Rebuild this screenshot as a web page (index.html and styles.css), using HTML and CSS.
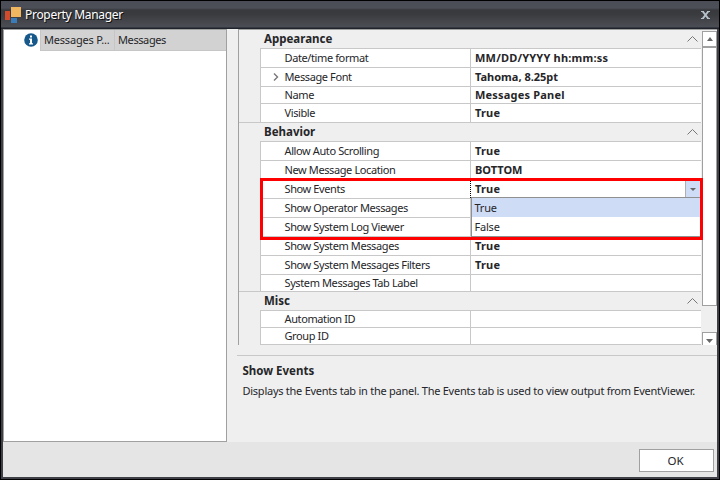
FILE: index.html
```html
<!DOCTYPE html>
<html lang="en">
<head>
<meta charset="utf-8">
<title>Property Manager</title>
<link rel="stylesheet" href="styles.css">
</head>
<body>
<div class="window">
  <header class="titlebar">
    <svg class="app-icon" width="17" height="17" viewBox="0 0 17 17" shape-rendering="crispEdges"><path fill="#d24b2c" d="M0 4h5v9H0z"/><path fill="#f0b660" d="M6 0h10v10H6z"/><path fill="#3b7cb8" d="M6 11h6v5H6z"/></svg>
    <h1>Property Manager</h1>
    <svg class="close" width="9" height="8" viewBox="0 0 9 8"><path d="M0 .5h3M6 .5h3M0 7.5h3M6 7.5h3" stroke="#b4c0ca"/><path d="M1.8.5l5.4 7M7.2.5l-5.4 7" stroke="#b4c0ca" stroke-width="1.9"/></svg>
  </header>
  <main class="content">
    <section class="list">
      <div class="list-row">
        <div class="info"><svg width="14" height="14" viewBox="0 0 14 14"><circle cx="7" cy="7" r="6.8" fill="#17598a"/><path d="M6 2.5h2v2H6zM5 5.5h3v4.7h1v1.2H5v-1.2h1V6.7H5z" fill="#fff"/></svg></div>
        <div class="cell type">Messages P...</div>
        <div class="cell name">Messages</div>
      </div>
    </section>
    <section class="side">
      <div class="grid-area">
        <div class="grid">
          <div class="category"><span>Appearance</span><svg class="chev" width="11" height="6" viewBox="0 0 11 6"><path d="M.5 5.5l5-5 5 5"/></svg></div>
          <div class="row"><div class="key">Date/time format</div><div class="value">MM/DD/YYYY hh:mm:ss</div></div>
          <div class="row"><div class="key"><svg class="expand" width="6" height="8" viewBox="0 0 6 8"><path d="M1 .5l3.5 3.5L1 7.5"/></svg>Message Font</div><div class="value tight">Tahoma, 8.25pt</div></div>
          <div class="row short"><div class="key">Name</div><div class="value">Messages Panel</div></div>
          <div class="row last"><div class="key">Visible</div><div class="value">True</div></div>
          <div class="category"><span>Behavior</span><svg class="chev" width="11" height="6" viewBox="0 0 11 6"><path d="M.5 5.5l5-5 5 5"/></svg></div>
          <div class="row"><div class="key">Allow Auto Scrolling</div><div class="value">True</div></div>
          <div class="row"><div class="key">New Message Location</div><div class="value tight">BOTTOM</div></div>
          <div class="row"><div class="key">Show Events</div><div class="value editing">True<span class="drop"><svg width="6" height="3" viewBox="0 0 6 3"><path d="M0 0h6L3 3z" fill="#666"/></svg></span></div></div>
          <div class="row"><div class="key">Show Operator Messages</div><div class="value"></div></div>
          <div class="row"><div class="key">Show System Log Viewer</div><div class="value"></div></div>
          <div class="row"><div class="key">Show System Messages</div><div class="value">True</div></div>
          <div class="row"><div class="key">Show System Messages Filters</div><div class="value">True</div></div>
          <div class="row short last"><div class="key">System Messages Tab Label</div><div class="value"></div></div>
          <div class="category"><span>Misc</span><svg class="chev" width="11" height="6" viewBox="0 0 11 6"><path d="M.5 5.5l5-5 5 5"/></svg></div>
          <div class="row short"><div class="key">Automation ID</div><div class="value"></div></div>
          <div class="row short"><div class="key">Group ID</div><div class="value"></div></div>
          <div class="menu"><div class="option selected">True</div><div class="option">False</div></div>
          <div class="highlight"></div>
        </div>
        <div class="scrollbar">
          <div class="arrow"><svg width="6" height="4" viewBox="0 0 6 4"><path d="M0 4h6L3 0z" fill="#666"/></svg></div>
          <div class="thumb"></div>
          <div class="arrow down"><svg width="7" height="4" viewBox="0 0 7 4"><path d="M0 0h7L3.5 4z" fill="#666"/></svg></div>
        </div>
      </div>
      <div class="help">
        <h2>Show Events</h2>
        <p>Displays the Events tab in the panel. The Events tab is used to view output from EventViewer.</p>
      </div>
    </section>
  </main>
  <footer class="footer"><button>OK</button></footer>
</div>
</body>
</html>
```
FILE: styles.css
```css
* { box-sizing: border-box; }
body { margin: 0; font: 11px/14px "Noto Sans", "Open Sans", sans-serif; letter-spacing: -0.39px; color: #262629; background: #000; }
h1, h2, p { margin: 0; }
svg { display: block; flex: none; }
.window { width: 720px; height: 480px; border: 1px solid #000; background: #3f4047; padding: 0 2px 2px; display: flex; flex-direction: column; overflow: hidden; }
.titlebar { height: 28px; flex: none; margin: 0 -2px; padding: 0 9px 0 4px; display: flex; align-items: center; background: linear-gradient(#4b4d56 0, #4d4f58 7px, #38393d 9px, #3b3c40 14px, #4a4d53 25px, #4a4d53 26px, #20222c 27px); }
.titlebar h1 { flex: 1; margin-left: 3px; font-size: 12px; line-height: 16px; font-weight: 400; letter-spacing: -0.3px; color: #fff; text-shadow: 1px 1px #111; }
.content { flex: 1; display: flex; min-height: 0; background: #efefef; }
.list { width: 224px; border: 1px solid #a0a0a0; background: #fff; }
.list-row { display: flex; height: 21px; }
.info { width: 36px; padding: 3px 0 0 20px; }
.cell { background: #d2d2d2; border-bottom: 1px solid #c6c6c6; padding: 3px 0 0 3px; border-left: 1px solid #c6c6c6; white-space: nowrap; letter-spacing: -0.2px; }
.type { width: 74px; }
.name { flex: 1; letter-spacing: -0.4px; }
.side { flex: 1; margin-left: 10px; display: flex; flex-direction: column; min-width: 0; }
.grid-area { display: flex; height: 316px; margin-left: 1px; border-left: 1px solid #a0a0a0; border-top: 1px solid #a0a0a0; }
.grid { width: 462px; position: relative; }
.category { height: 19px; margin-left: 21px; border-bottom: 1px solid #c8c8c8; padding: 0 4px; display: flex; align-items: center; justify-content: space-between; font-weight: 700; font-size: 11.5px; letter-spacing: 0; }
.chev, .expand { fill: none; stroke: #777; }
.chev { margin-right: -1px; }
.row { height: 19px; padding-left: 21px; display: flex; border-bottom: 1px solid #c8c8c8; background: linear-gradient(90deg, #efefef 21px, #fff 21px); position: relative; }
.row:not(.last)::before { content: ""; position: absolute; left: 0; bottom: -1px; width: 21px; height: 1px; background: #efefef; }
.short { height: 17px; }
.key { width: 210px; border-left: 1px solid #c8c8c8; padding-left: 23.5px; display: flex; align-items: center; white-space: nowrap; }
.expand { margin: 0 5.5px 0 -11.5px; stroke-width: 1.4; }
.value { flex: 1; border-left: 1px solid #c8c8c8; padding-left: 4px; display: flex; align-items: center; font-weight: 700; letter-spacing: 0.2px; }
.tight { letter-spacing: 0; }
.editing { border-left: 1px dotted #000; }
.drop { margin-left: auto; align-self: stretch; width: 16px; background: #cfdcf5; border-left: 1px solid #b0b0b0; display: flex; align-items: center; justify-content: center; padding-right: 1px; }
.menu { position: absolute; left: 232px; top: 167px; width: 230px; height: 40px; border: 1px solid #909090; background: #fff; }
.option { height: 19px; padding: 3px 0 0 2.5px; letter-spacing: -0.2px; }
.selected { background: #cfdcf5; }
.highlight { position: absolute; left: 21px; top: 148px; width: 443px; height: 62px; border: 3px solid #f00; z-index: 2; }
.scrollbar { width: 15px; margin: 1px 0 0 1px; display: flex; flex-direction: column; overflow: hidden; }
.arrow { height: 16px; flex: none; border: 1px solid #a0a0a0; background: #fff; display: flex; align-items: center; justify-content: center; }
.thumb { height: 260px; flex: none; margin-top: -1px; border: 1px solid #a0a0a0; border-top-width: 2px; background: #fff; }
.down { margin-top: 26px; }
.down svg { margin-top: 2px; }
.help { margin-top: 10px; border-top: 1px solid #c8c8c8; padding: 7px 5.5px; flex: 1; }
.help h2 { font-size: 11.5px; line-height: 15px; letter-spacing: 0; }
.help p { margin-top: 6px; white-space: nowrap; letter-spacing: -0.255px; }
.footer { height: 35px; flex: none; background: #e5e5e5; display: flex; justify-content: flex-end; padding: 7px 3px 5px; }
.footer button { width: 75px; height: 23px; border: 1px solid #a0a0a0; background: #fff; font: inherit; font-size: 11.5px; color: inherit; padding: 0 2px 0 0; }
```
